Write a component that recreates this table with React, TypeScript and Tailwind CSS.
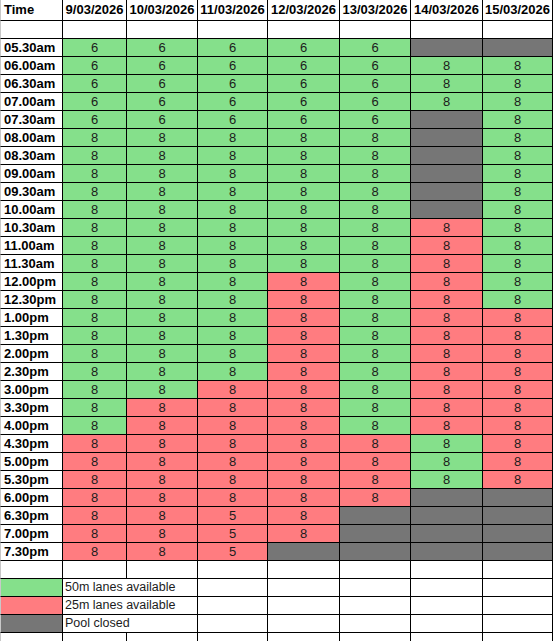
import React from "react";

const dates = ["9/03/2026", "10/03/2026", "11/03/2026", "12/03/2026", "13/03/2026", "14/03/2026", "15/03/2026"];

// g = 50m lanes, r = 25m lanes, x = pool closed
const rows: [string, string][] = [
  ["05.30am", "g6 g6 g6 g6 g6 x x"],
  ["06.00am", "g6 g6 g6 g6 g6 g8 g8"],
  ["06.30am", "g6 g6 g6 g6 g6 g8 g8"],
  ["07.00am", "g6 g6 g6 g6 g6 g8 g8"],
  ["07.30am", "g6 g6 g6 g6 g6 x g8"],
  ["08.00am", "g8 g8 g8 g8 g8 x g8"],
  ["08.30am", "g8 g8 g8 g8 g8 x g8"],
  ["09.00am", "g8 g8 g8 g8 g8 x g8"],
  ["09.30am", "g8 g8 g8 g8 g8 x g8"],
  ["10.00am", "g8 g8 g8 g8 g8 x g8"],
  ["10.30am", "g8 g8 g8 g8 g8 r8 g8"],
  ["11.00am", "g8 g8 g8 g8 g8 r8 g8"],
  ["11.30am", "g8 g8 g8 g8 g8 r8 g8"],
  ["12.00pm", "g8 g8 g8 r8 g8 r8 g8"],
  ["12.30pm", "g8 g8 g8 r8 g8 r8 g8"],
  ["1.00pm", "g8 g8 g8 r8 g8 r8 r8"],
  ["1.30pm", "g8 g8 g8 r8 g8 r8 r8"],
  ["2.00pm", "g8 g8 g8 r8 g8 r8 r8"],
  ["2.30pm", "g8 g8 g8 r8 g8 r8 r8"],
  ["3.00pm", "g8 g8 r8 r8 g8 r8 r8"],
  ["3.30pm", "g8 r8 r8 r8 g8 r8 r8"],
  ["4.00pm", "g8 r8 r8 r8 g8 r8 r8"],
  ["4.30pm", "r8 r8 r8 r8 r8 g8 r8"],
  ["5.00pm", "r8 r8 r8 r8 r8 g8 r8"],
  ["5.30pm", "r8 r8 r8 r8 r8 g8 r8"],
  ["6.00pm", "r8 r8 r8 r8 r8 x x"],
  ["6.30pm", "r8 r8 r5 r8 x x x"],
  ["7.00pm", "r8 r8 r5 r8 x x x"],
  ["7.30pm", "r8 r8 r5 x x x x"],
];

const fill: Record<string, string> = {
  g: "bg-[#85e08b]",
  r: "bg-[#ff7c80]",
  x: "bg-[#767676]",
};

const cell = "border-r border-b border-black";
const first = "border-r border-b border-l border-b-black border-r-black border-l-[#c8c8c8]";

const legend: [string, string][] = [
  ["g", "50m lanes available"],
  ["r", "25m lanes available"],
  ["x", "Pool closed"],
];

export default function App() {
  return (
    <div className="h-[641px] w-[553px] overflow-hidden bg-white font-['Liberation_Sans',Arial,sans-serif] text-[13px] text-[#1c1c1c]">
      <div className="grid grid-cols-[63px_64px_71px_70px_72px_71px_72px_70px] grid-rows-[21px] auto-rows-[18px]">
        {/* header */}
        <div className={`${first} pl-[3px] font-bold leading-[20px] text-black`}>Time</div>
        {dates.map((d) => (
          <div key={d} className={`${cell} text-center font-bold leading-[20px] text-black`}>{d}</div>
        ))}

        {/* blank row */}
        <div className={first} />
        {dates.map((d) => (
          <div key={d + "b"} className={cell} />
        ))}

        {rows.map(([time, spec]) => (
          <React.Fragment key={time}>
            <div className={`${first} pl-[3px] font-bold leading-[17px] text-black`}>{time}</div>
            {spec.split(" ").map((v, i) => (
              <div key={i} className={`${cell} ${fill[v[0]]} text-center leading-[17px]`}>
                {v.slice(1)}
              </div>
            ))}
          </React.Fragment>
        ))}

        {/* blank row */}
        <div className={first} />
        {dates.map((d) => (
          <div key={d + "e"} className={cell} />
        ))}

        {legend.map(([k, label]) => (
          <React.Fragment key={k}>
            <div className={`${first} ${fill[k]}`} />
            <div className={`${cell} col-span-2 whitespace-nowrap pl-[2px] text-[12.5px] leading-[17px]`}>{label}</div>
            <div className={cell} />
            <div className={cell} />
            <div className={cell} />
            <div className={cell} />
            <div className={cell} />
          </React.Fragment>
        ))}

        {/* trailing row */}
        <div className={first} />
        {dates.map((d) => (
          <div key={d + "t"} className={cell} />
        ))}
      </div>
    </div>
  );
}
